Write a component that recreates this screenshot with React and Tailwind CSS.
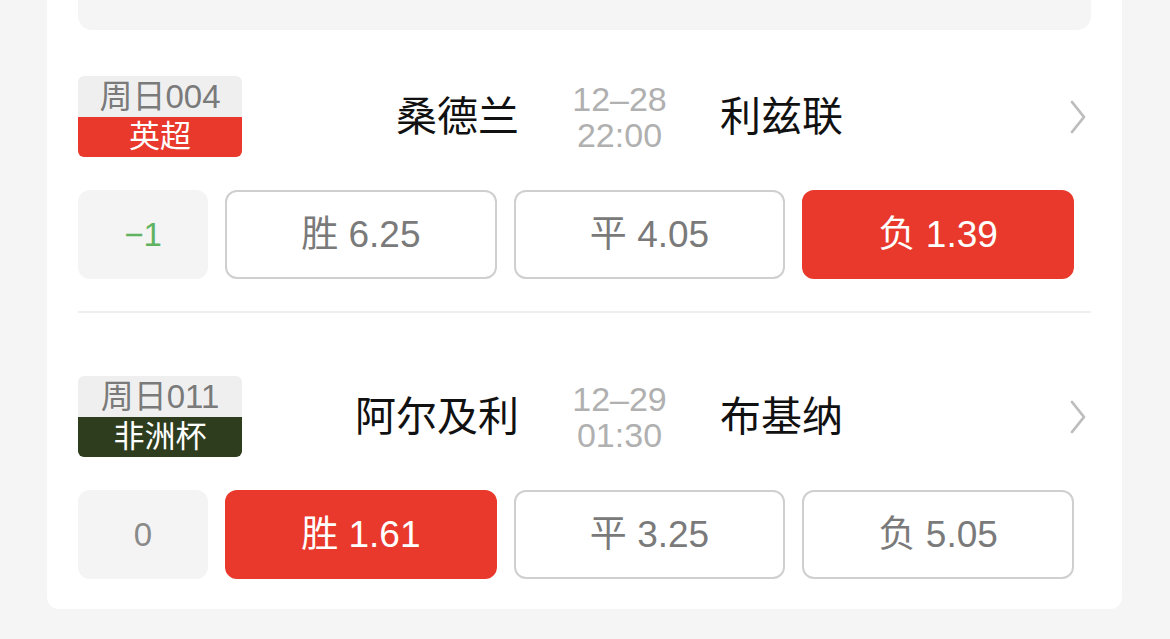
import { Fragment } from "react";

const matches = [
  {
    no: "周日004",
    league: "英超",
    leagueBg: "bg-[#e8392c]",
    home: "桑德兰",
    away: "利兹联",
    date: "12–28",
    time: "22:00",
    handicap: "−1",
    handicapColor: "text-[#5fb360]",
    odds: [
      { label: "胜", value: "6.25" },
      { label: "平", value: "4.05" },
      { label: "负", value: "1.39", active: true },
    ],
  },
  {
    no: "周日011",
    league: "非洲杯",
    leagueBg: "bg-[#2f3d1f]",
    home: "阿尔及利",
    away: "布基纳",
    date: "12–29",
    time: "01:30",
    handicap: "0",
    handicapColor: "text-[#8a8a8a]",
    odds: [
      { label: "胜", value: "1.61", active: true },
      { label: "平", value: "3.25" },
      { label: "负", value: "5.05" },
    ],
  },
];

const Chevron = () => (
  <svg width="18" height="36" viewBox="0 0 18 36" fill="none">
    <path d="M3 3 L15 18 L3 33" stroke="#bdbdbd" strokeWidth="2.8" strokeLinecap="round" strokeLinejoin="round" />
  </svg>
);

const MatchRow = ({ m }) => (
  <div>
    <div className="flex items-center">
      <div className="w-[164px] h-[81px] rounded-[6px] overflow-hidden flex flex-col shrink-0">
        <div className="h-[41px] bg-[#efefef] text-[#7a7a7a] text-[33px] leading-[41px] text-center">
          {m.no}
        </div>
        <div className={`h-[40px] ${m.leagueBg} text-white text-[31px] leading-[40px] text-center`}>
          {m.league}
        </div>
      </div>
      <div className="w-[277px] text-right text-[41px] leading-[50px] text-[#111]">{m.home}</div>
      <div className="w-[201px] flex flex-col items-center text-[34px] leading-[36px] text-[#b0b0b0]">
        <span>{m.date}</span>
        <span>{m.time}</span>
      </div>
      <div className="flex-1 text-[41px] leading-[50px] text-[#111]">{m.away}</div>
      <div className="pr-[4px]">
        <Chevron />
      </div>
    </div>
    <div className="flex gap-[17px] mt-[33px] pr-[17px]">
      <div className={`w-[130px] h-[89px] rounded-[12px] bg-[#f4f4f4] flex items-center justify-center text-[33px] ${m.handicapColor}`}>
        {m.handicap}
      </div>
      {m.odds.map((o) => (
        <div
          key={o.label}
          className={`flex-1 h-[89px] rounded-[12px] border-2 flex items-center justify-center text-[37px] ${
            o.active ? "bg-[#e8392c] border-[#e8392c] text-white" : "border-[#cfcfcf] text-[#7a7a7a]"
          }`}
        >
          {o.label} {o.value}
        </div>
      ))}
    </div>
  </div>
);

const App = () => {
  return (
    <div
      className="w-[1170px] h-[639px] bg-[#f5f5f5] overflow-hidden"
      style={{ fontFamily: '"Liberation Sans", "Noto Sans CJK SC", sans-serif' }}
    >
      <div className="ml-[47px] w-[1075px] bg-white rounded-b-[12px] px-[31px] pb-[30px]">
        <div className="h-[30px] bg-[#f5f5f5] rounded-b-[14px]" />
        <div className="pt-[46px]">
          {matches.map((m, i) => (
            <Fragment key={m.no}>
              {i > 0 && <div className="h-[2px] bg-[#efefef] mt-[32px] mb-[63px]" />}
              <MatchRow m={m} />
            </Fragment>
          ))}
        </div>
      </div>
    </div>
  );
};

export default App;
